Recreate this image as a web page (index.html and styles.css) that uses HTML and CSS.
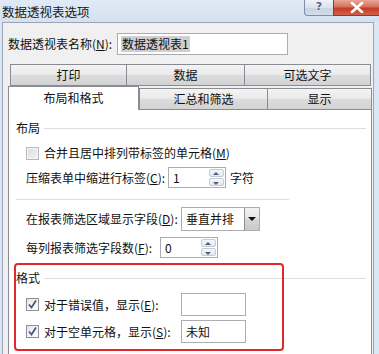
FILE: index.html
```html
<!DOCTYPE html>
<html lang="zh-CN">
<head>
<meta charset="utf-8">
<title>数据透视表选项</title>
<link rel="stylesheet" href="styles.css">
</head>
<body>
<div class="window">
  <div class="titlebar">
    <span class="title">数据透视表选项</span>
    <div class="caption">
      <div class="btn-help">?</div>
      <div class="btn-close">
        <svg width="14" height="11" viewBox="0 0 14 11"><path d="M2 1 L12 10 M12 1 L2 10" stroke="#fff" stroke-width="2.6" stroke-linecap="round" fill="none"/></svg>
      </div>
    </div>
  </div>
  <div class="client">
    <div class="name-row">
      <span class="name-label">数据透视表名称(<u>N</u>):</span>
      <div class="textbox name-box"><span class="sel">数据透视表1</span></div>
    </div>
    <div class="tabs">
      <div class="tab-row row1">
        <div class="tab t-print">打印</div>
        <div class="tab t-data">数据</div>
        <div class="tab t-alt">可选文字</div>
      </div>
      <div class="tab-row row2">
        <div class="tab selected t-layout">布局和格式</div>
        <div class="tab t-total">汇总和筛选</div>
        <div class="tab t-show">显示</div>
      </div>
    </div>
    <div class="panel">
      <div class="group-head g-layout"><span>布局</span><i class="rule"></i></div>
      <div class="row check-row r-merge">
        <span class="checkbox"></span>
        <span>合并且居中排列带标签的单元格(<u>M</u>)</span>
      </div>
      <div class="row r-indent">
        <span class="lbl lbl-indent">压缩表单中缩进行标签(<u>C</u>):</span>
        <div class="textbox spin"><span class="val">1</span>
          <div class="spin-btns"><span class="sb up"></span><span class="sb down"></span></div>
        </div>
        <span class="unit">字符</span>
      </div>
      <div class="sep"></div>
      <div class="row r-combo">
        <span class="lbl lbl-combo">在报表筛选区域显示字段(<u>D</u>):</span>
        <div class="textbox combo"><span class="val">垂直并排</span><span class="drop"></span></div>
      </div>
      <div class="row r-count">
        <span class="lbl lbl-count">每列报表筛选字段数(<u>F</u>):</span>
        <div class="textbox spin"><span class="val">0</span>
          <div class="spin-btns"><span class="sb up"></span><span class="sb down"></span></div>
        </div>
      </div>
      <div class="group-head g-format"><span>格式</span><i class="rule"></i></div>
      <div class="row r-err">
        <span class="lbl lbl-fmt"><span class="checkbox checked"><svg width="11" height="11" viewBox="0 0 11 11"><path d="M2 5.5 L4.5 8.5 L9 1.5" stroke="#3f5a8c" stroke-width="1.8" fill="none"/></svg></span>对于错误值，显示(<u>E</u>):</span>
        <div class="textbox fmt-box"></div>
      </div>
      <div class="row r-empty">
        <span class="lbl lbl-fmt"><span class="checkbox checked"><svg width="11" height="11" viewBox="0 0 11 11"><path d="M2 5.5 L4.5 8.5 L9 1.5" stroke="#3f5a8c" stroke-width="1.8" fill="none"/></svg></span>对于空单元格，显示(<u>S</u>):</span>
        <div class="textbox fmt-box"><span class="val">未知</span></div>
      </div>
      <div class="highlight"></div>
    </div>
  </div>
</div>
</body>
</html>
```
FILE: styles.css
```css
html, body {
  margin: 0;
  padding: 0;
}
body {
  width: 379px;
  height: 354px;
  overflow: hidden;
  background: #dbe6f4;
  font-family: "Noto Sans CJK SC", "Noto Sans", sans-serif;
  font-size: 12px;
  line-height: 16px;
  color: #111;
}
u { text-decoration: underline; text-underline-offset: 1px; }

.window {
  display: flex;
  flex-direction: column;
  height: 354px;
}

.titlebar {
  flex: none;
  height: 22px;
  display: flex;
  align-items: flex-start;
  background: linear-gradient(#e1eaf6, #d5e1f1);
}
.title {
  margin: 4px 0 0 2px;
  font-size: 12.5px;
  color: #1a1a1a;
}
.caption {
  margin-left: auto;
  display: flex;
}
.btn-help {
  box-sizing: border-box;
  width: 29px;
  height: 16px;
  border: 1px solid #7d8ea6;
  border-top: none;
  border-right: none;
  border-radius: 0 0 0 4px;
  background: linear-gradient(#eef3f9, #d9e2ee 50%, #c7d3e3 51%, #d3dcea);
  text-align: center;
  font-family: "DejaVu Sans", sans-serif;
  font-weight: bold;
  font-size: 11px;
  line-height: 14px;
  color: #55657e;
  text-shadow: 0 0 2px #fff;
}
.btn-close {
  box-sizing: border-box;
  width: 46px;
  height: 16px;
  border: 1px solid #8b3a2e;
  border-top: none;
  border-right: none;
  background: linear-gradient(#eaa797, #d6705c 45%, #c53d27 55%, #d4604a);
  display: flex;
  align-items: center;
  justify-content: center;
}

.client {
  flex: 1;
  box-sizing: border-box;
  width: 372px;
  margin-left: 2px;
  border: 1px solid #9aa5b5;
  border-bottom: none;
  background: #f0f0f0;
  padding-left: 5px;
  display: flex;
  flex-direction: column;
}

.name-row {
  margin-top: 10px;
  height: 22px;
  display: flex;
  align-items: center;
}
.name-label {
  flex: 0 0 109px;
}
.textbox {
  box-sizing: border-box;
  border: 1px solid #abadb3;
  background: #fff;
  display: flex;
  align-items: center;
  position: relative;
}
.name-box {
  width: 171px;
  height: 22px;
  padding-left: 3px;
}
.sel {
  background: #cfcfcf;
  padding: 0 1px;
}

.tabs {
  margin-top: 9px;
}
.tab-row {
  display: flex;
}
.tab {
  box-sizing: border-box;
  border: 1px solid #898c95;
  background: linear-gradient(#f4f4f4, #e9e9e9 50%, #dcdcdc 51%, #d3d3d3);
  display: flex;
  align-items: center;
  justify-content: center;
}
.row1 {
  padding-left: 2px;
}
.row1 .tab {
  height: 22px;
}
.row1 .tab + .tab {
  margin-left: -1px;
}
.t-print { width: 117px; }
.t-data { width: 119px; }
.t-alt { width: 127px; }

.row2 {
  height: 23px;
  align-items: flex-end;
}
.row2 .tab {
  height: 21px;
  border-bottom: none;
}
.row2 .tab.selected {
  height: 24px;
  margin-bottom: -1px;
  background: #fff;
  position: relative;
  z-index: 1;
  padding-bottom: 2px;
}
.t-layout { width: 131px; }
.t-total { width: 129px; }
.t-show { width: 105px; margin-left: -1px; }

.panel {
  flex: 1;
  box-sizing: border-box;
  width: 364px;
  border: 1px solid #898c95;
  border-bottom: none;
  background: #fff;
  position: relative;
}

.group-head {
  height: 16px;
  display: flex;
  align-items: center;
  padding-left: 7px;
}
.rule {
  flex: 1;
  height: 1px;
  background: #d5dfe5;
  margin: 0 5px 0 4px;
}
.g-layout { margin-top: 10px; }
.g-format { margin-top: 12px; }

.row {
  display: flex;
  align-items: center;
  padding-left: 17px;
}
.check-row { height: 16px; }
.r-merge { margin-top: 9px; }

.checkbox {
  box-sizing: border-box;
  flex: none;
  width: 13px;
  height: 13px;
  margin-right: 5px;
  border: 1px solid #b9b9b9;
  background: linear-gradient(135deg, #dcdcdc, #f4f4f4);
  box-shadow: inset 0 0 0 1px #f6f6f6;
  display: inline-flex;
  align-items: center;
  justify-content: center;
  vertical-align: -2px;
}
.checkbox.checked {
  border-color: #8f8f8f;
  background: linear-gradient(135deg, #e6e6e6, #ffffff);
  box-shadow: none;
}

.lbl { flex: none; display: flex; align-items: center; }
.lbl-indent { width: 142px; }
.lbl-combo { width: 155px; }
.lbl-count { width: 134px; }
.lbl-fmt { width: 155px; }

.r-indent { margin-top: 6px; height: 21px; }
.spin {
  width: 58px;
  height: 21px;
  padding-left: 4px;
}
.spin-btns {
  position: absolute;
  right: 1px;
  top: 1px;
  bottom: 1px;
  width: 15px;
  display: flex;
  flex-direction: column;
  gap: 1px;
}
.sb {
  flex: 1;
  box-sizing: border-box;
  border: 1px solid #c5ccd4;
  border-radius: 2px;
  background: linear-gradient(#f5f7f9, #e3e8ee);
  position: relative;
}
.sb::after {
  content: "";
  position: absolute;
  left: 3px;
  border-left: 3.5px solid transparent;
  border-right: 3.5px solid transparent;
}
.sb.up::after {
  top: 2px;
  border-bottom: 3px solid #4e5f7c;
}
.sb.down::after {
  top: 3px;
  border-top: 3px solid #4e5f7c;
}
.unit { margin-left: 4px; }

.sep {
  margin: 11px 0 0 7px;
  width: 273px;
  height: 1px;
  background: #d5dfe5;
}

.r-combo { margin-top: 7px; height: 24px; }
.combo {
  width: 79px;
  height: 24px;
  padding-left: 4px;
}
.drop {
  position: absolute;
  right: 0;
  top: 0;
  bottom: 0;
  width: 15px;
  box-sizing: border-box;
  border-left: 1px solid #8e8f8f;
  background: linear-gradient(#f2f2f2, #e6e6e6 50%, #d6d6d6 51%, #c9c9c9);
}
.drop::after {
  content: "";
  position: absolute;
  left: 3px;
  top: 9px;
  border-left: 4px solid transparent;
  border-right: 4px solid transparent;
  border-top: 4px solid #111;
}

.r-count { margin-top: 6px; height: 21px; }

.r-err { margin-top: 7px; height: 23px; }
.r-empty { margin-top: 4px; height: 23px; }
.fmt-box {
  width: 65px;
  height: 23px;
  padding-left: 4px;
}

.highlight {
  position: absolute;
  left: 5px;
  top: 153px;
  width: 270px;
  height: 88px;
  box-sizing: border-box;
  border: 2px solid #e2282b;
  border-radius: 4px;
}
```
